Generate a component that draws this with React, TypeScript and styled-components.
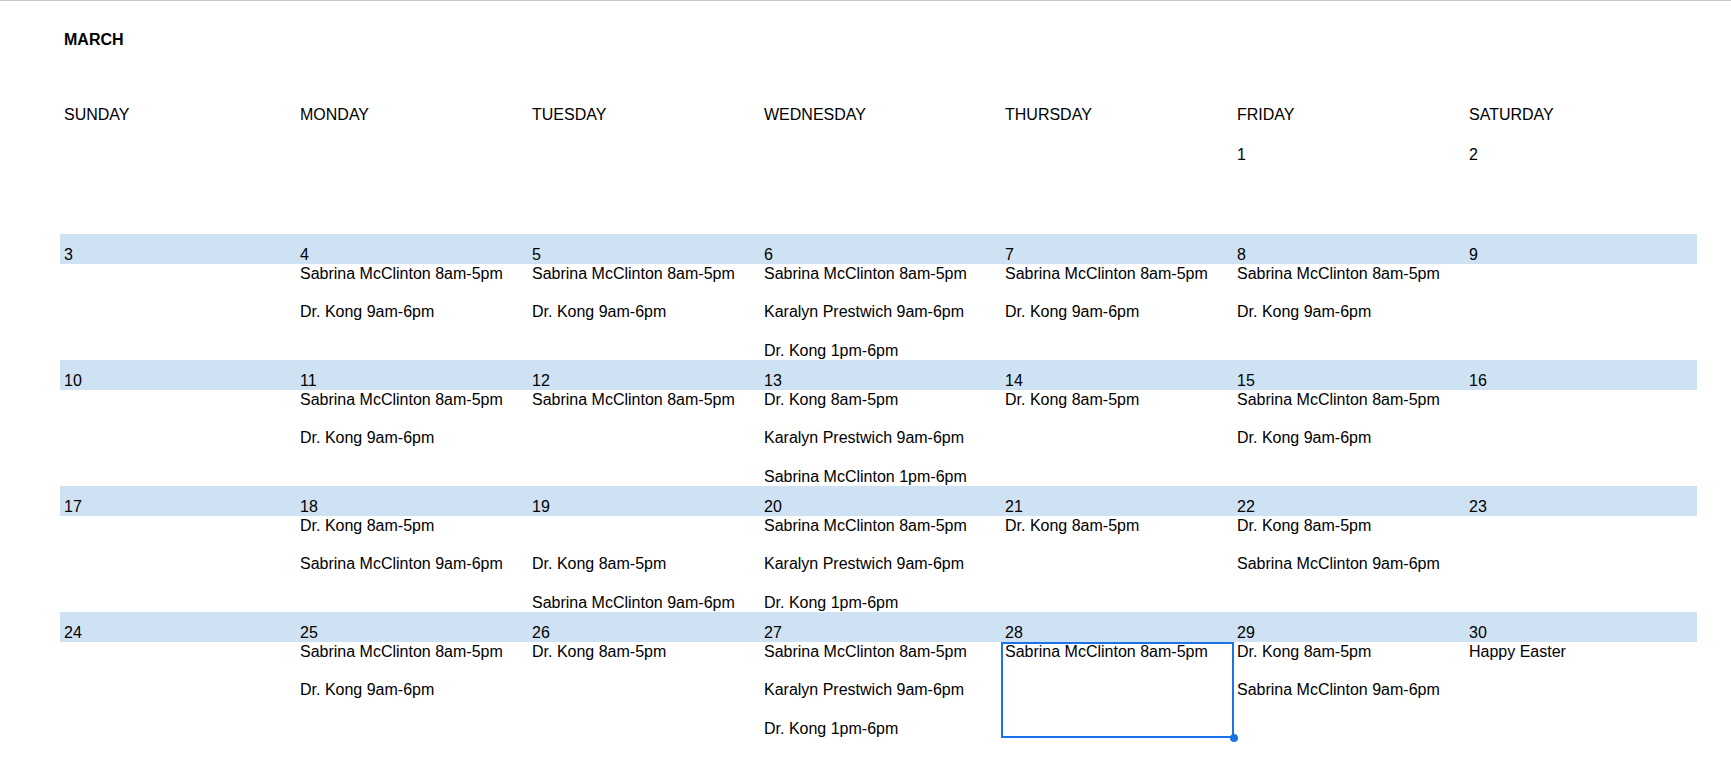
import React from "react";
import styled, { createGlobalStyle } from "styled-components";

const GlobalStyle = createGlobalStyle`
  html, body {
    margin: 0;
    padding: 0;
    background: #ffffff;
  }
  body {
    font-family: "Liberation Sans", Arial, Helvetica, sans-serif;
    font-size: 16px;
    color: #000000;
  }
`;

const COLS = "236px 232px 232px 241px 232px 232px 232px";
const LINE = 19.2;

const Page = styled.div`
  border-top: 1px solid #c7c7c7;
  padding-left: 60px;
  min-height: 772px;
  box-sizing: border-box;
`;

const Title = styled.h1`
  margin: 0;
  padding: 29px 0 0 4px;
  font-size: 16px;
  font-weight: 700;
  line-height: ${LINE}px;
`;

const Row = styled.div<{ $top?: number; $height?: number; $shaded?: boolean; $align?: string }>`
  display: grid;
  grid-template-columns: ${COLS};
  width: 1637px;
  margin-top: ${(p) => p.$top ?? 0}px;
  height: ${(p) => (p.$height ? `${p.$height}px` : "auto")};
  background: ${(p) => (p.$shaded ? "#cfe2f3" : "transparent")};
  align-items: ${(p) => p.$align ?? "start"};
`;

const Cell = styled.div`
  position: relative;
  padding-left: 4px;
  line-height: ${LINE}px;
  white-space: nowrap;
  height: 100%;
  box-sizing: border-box;
`;

const DateCell = styled.div`
  padding-left: 4px;
  line-height: ${LINE}px;
  white-space: nowrap;
`;

const EventList = styled.div`
  display: flex;
  flex-direction: column;
  gap: ${LINE}px;
`;

const EventLine = styled.div`
  line-height: ${LINE}px;
  white-space: nowrap;
`;

const SelectionFrame = styled.div`
  position: absolute;
  top: 0;
  left: 0;
  right: -1px;
  bottom: 0;
  border: 2px solid #1a73e8;
  pointer-events: none;
`;

const Handle = styled.div`
  position: absolute;
  right: -6px;
  bottom: -6px;
  width: 8px;
  height: 8px;
  border-radius: 50%;
  background: #1a73e8;
`;

type Day = { date?: string; events?: string[]; selected?: boolean };

const SM = "Sabrina McClinton";
const DK = "Dr. Kong";
const KP = "Karalyn Prestwich";

const weekdays = ["SUNDAY", "MONDAY", "TUESDAY", "WEDNESDAY", "THURSDAY", "FRIDAY", "SATURDAY"];

const firstWeek: Day[] = [{}, {}, {}, {}, {}, { date: "1" }, { date: "2" }];

const weeks: Day[][] = [
  [
    { date: "3" },
    { date: "4", events: [`${SM} 8am-5pm`, `${DK} 9am-6pm`] },
    { date: "5", events: [`${SM} 8am-5pm`, `${DK} 9am-6pm`] },
    { date: "6", events: [`${SM} 8am-5pm`, `${KP} 9am-6pm`, `${DK} 1pm-6pm`] },
    { date: "7", events: [`${SM} 8am-5pm`, `${DK} 9am-6pm`] },
    { date: "8", events: [`${SM} 8am-5pm`, `${DK} 9am-6pm`] },
    { date: "9" },
  ],
  [
    { date: "10" },
    { date: "11", events: [`${SM} 8am-5pm`, `${DK} 9am-6pm`] },
    { date: "12", events: [`${SM} 8am-5pm`] },
    { date: "13", events: [`${DK} 8am-5pm`, `${KP} 9am-6pm`, `${SM} 1pm-6pm`] },
    { date: "14", events: [`${DK} 8am-5pm`] },
    { date: "15", events: [`${SM} 8am-5pm`, `${DK} 9am-6pm`] },
    { date: "16" },
  ],
  [
    { date: "17" },
    { date: "18", events: [`${DK} 8am-5pm`, `${SM} 9am-6pm`] },
    { date: "19", events: ["", `${DK} 8am-5pm`, `${SM} 9am-6pm`] },
    { date: "20", events: [`${SM} 8am-5pm`, `${KP} 9am-6pm`, `${DK} 1pm-6pm`] },
    { date: "21", events: [`${DK} 8am-5pm`] },
    { date: "22", events: [`${DK} 8am-5pm`, `${SM} 9am-6pm`] },
    { date: "23" },
  ],
  [
    { date: "24" },
    { date: "25", events: [`${SM} 8am-5pm`, `${DK} 9am-6pm`] },
    { date: "26", events: [`${DK} 8am-5pm`] },
    { date: "27", events: [`${SM} 8am-5pm`, `${KP} 9am-6pm`, `${DK} 1pm-6pm`] },
    { date: "28", events: [`${SM} 8am-5pm`], selected: true },
    { date: "29", events: [`${DK} 8am-5pm`, `${SM} 9am-6pm`] },
    { date: "30", events: ["Happy Easter"] },
  ],
];

const Week: React.FC<{ days: Day[] }> = ({ days }) => (
  <>
    <Row $height={30} $shaded $align="end">
      {days.map((d, i) => (
        <DateCell key={i}>{d.date ?? ""}</DateCell>
      ))}
    </Row>
    <Row $height={96}>
      {days.map((d, i) => (
        <Cell key={i}>
          <EventList>
            {(d.events ?? []).map((e, j) => (
              <EventLine key={j}>{e || "\u00a0"}</EventLine>
            ))}
          </EventList>
          {d.selected && (
            <SelectionFrame>
              <Handle />
            </SelectionFrame>
          )}
        </Cell>
      ))}
    </Row>
  </>
);

export default function App() {
  return (
    <>
      <GlobalStyle />
      <Page>
        <Title>MARCH</Title>
        <Row $top={56}>
          {weekdays.map((w) => (
            <DateCell key={w}>{w}</DateCell>
          ))}
        </Row>
        <Row $top={21} $height={88.6}>
          {firstWeek.map((d, i) => (
            <DateCell key={i}>{d.date ?? ""}</DateCell>
          ))}
        </Row>
        {weeks.map((w, i) => (
          <Week key={i} days={w} />
        ))}
      </Page>
    </>
  );
}
